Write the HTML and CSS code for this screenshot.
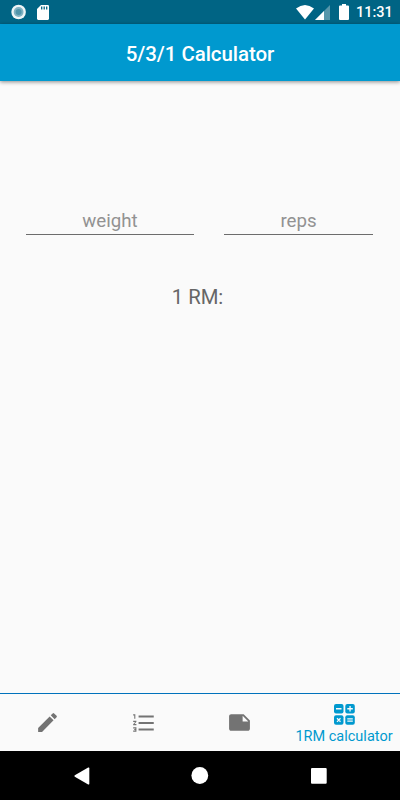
FILE: index.html
```html
<!DOCTYPE html>
<html lang="en">
<head>
<meta charset="utf-8">
<title>5/3/1 Calculator</title>
<link rel="stylesheet" href="styles.css">
</head>
<body>
<div class="status">
  <svg class="disc" width="16" height="16" viewBox="0 0 16 16"><circle cx="7.600" cy="8" r="7.3" fill="#eef5f7"/><circle cx="7.600" cy="8" r="4.9" fill="#80b2c2"/><circle cx="7.600" cy="8" r="3" fill="#4f94aa"/></svg>
  <svg class="sd" width="12" height="15" viewBox="0 0 12 15"><path fill="#fff" d="M4 0h6.8Q12 0 12 1.2v12.4Q12 15 10.8 15H1.2Q0 15 0 13.600V4z"/><path d="M4.700 1.500v3M7.200 1.500v3M9.700 1.500v3" stroke="#006484" stroke-width="1.300"/></svg>
  <span class="spacer"></span>
  <svg class="wifi" width="18" height="15" viewBox="0 0 18 15"><path fill="#fff" d="M0 3.500Q9-3.500 18 3.500L9 14.500z"/></svg>
  <svg class="signal" width="15" height="15" viewBox="0 0 15 15"><path fill="#5796aa" d="M15 0v15H0z"/><path fill="#fff" d="M9 6v9H0z"/></svg>
  <svg class="battery" width="10" height="16" viewBox="0 0 10 16"><path fill="#fff" d="M3 0h4v1.500h2Q10 1.500 10 2.500V15q0 1-1 1H1q-1 0-1-1V2.500q0-1 1-1h2z"/></svg>
  <span class="clock">11:31</span>
</div>
<header class="appbar"><h1>5/3/1 Calculator</h1></header>
<main>
  <div class="fields">
    <div class="field weight">weight</div>
    <div class="field reps">reps</div>
  </div>
  <div class="result">1 RM:</div>
</main>
<nav class="tabs">
  <div class="tab nudge"><svg width="25" height="25" viewBox="0 0 24 24"><path fill="#737373" d="M3 17.250V21h3.750L17.810 9.940l-3.750-3.750L3 17.250zM20.710 7.040a1 1 0 0 0 0-1.410l-2.340-2.340a1 1 0 0 0-1.410 0l-1.830 1.830 3.750 3.750 1.830-1.830z"/></svg></div>
  <div class="tab"><svg width="26" height="26" viewBox="0 0 24 24"><path fill="#737373" d="M2 17h2v.5H3v1h1v.5H2v1h3v-4H2v1zm1-9h1V4H2v1h1v3zm-1 3h1.800L2 13.100v.9h3v-1H3.200L5 10.900V10H2v1zm5-6v2h14V5H7zm0 14h14v-2H7v2zm0-6h14v-2H7v2z"/></svg></div>
  <div class="tab nudge"><svg width="25" height="25" viewBox="0 0 24 24"><path fill="#737373" d="M22 10l-6-6H4c-1.100 0-2 .9-2 2v12c0 1.100.9 2 2 2h16c1.100 0 2-.9 2-2v-8zm-7-4.500l5.500 5.500H15V5.500z"/></svg></div>
  <div class="tab active">
    <svg width="21" height="21" viewBox="0 0 21 21"><g fill="#0099cf"><rect width="9.500" height="9.500" rx="2"/><rect x="11.300" width="9.500" height="9.500" rx="2"/><rect y="11.300" width="9.500" height="9.500" rx="2"/><rect x="11.300" y="11.300" width="9.500" height="9.500" rx="2"/></g><path d="M2 4.750h5.500M13.300 4.750h5.500M16.050 2v5.500M3 14.300l3.500 3.500M6.500 14.300L3 17.800M13.300 14.900h5.500M13.300 17.200h5.500" fill="none" stroke="#fafafa" stroke-width="1.300"/></svg>
    <span>1RM calculator</span>
  </div>
</nav>
<div class="system">
  <svg width="16" height="18" viewBox="0 0 16 18"><path fill="#fff" d="M14.200.6Q15.300 0 15.300 1.200v15.600q0 1.200-1.100.6L.8 9.700q-1-.7 0-1.400z"/></svg>
  <svg width="18" height="18" viewBox="0 0 18 18"><circle cx="7.800" cy="8.500" r="8.400" fill="#fff"/></svg>
  <svg width="16" height="16" viewBox="0 0 16 16"><rect width="15.700" height="15.700" rx="1" fill="#fff"/></svg>
</div>
</body>
</html>
```
FILE: styles.css
```css
* { box-sizing: border-box; }
body {
  margin: 0;
  height: 800px;
  display: flex;
  flex-direction: column;
  overflow: hidden;
  background: #fafafa;
  font-family: Roboto, sans-serif;
}
svg { display: block; flex: none; overflow: visible; }
.status {
  height: 24px;
  flex: none;
  display: flex;
  align-items: center;
  padding: 0 8px 0 11px;
  background: #006484;
}
.sd { margin-left: 10px; }
.spacer { flex: 1; }
.wifi { margin-right: 1px; }
.battery { margin: 0 7px 0 9px; }
.clock {
  width: 36px;
  color: #fff;
  font-size: 14.5px;
  font-weight: 500;
  line-height: 24px;
  white-space: nowrap;
  padding-top: 2px;
}
.appbar {
  height: 57px;
  flex: none;
  background: #0099cf;
  box-shadow: 0 1px 4px rgba(0, 0, 0, .45);
}
h1 {
  margin: 0;
  padding-top: 1px;
  color: #fff;
  font-size: 20.5px;
  font-weight: 500;
  line-height: 58px;
  letter-spacing: -.06px;
  text-align: center;
}
main { flex: 1; padding: 123px 27px 0 26px; }
.fields { display: flex; gap: 30px; }
.field {
  height: 31px;
  border-bottom: 1px solid #6c6c6c;
  color: #929292;
  font-size: 18.7px;
  line-height: 34px;
  text-align: center;
}
.weight { width: 168px; }
.reps { flex: 1; }
.result {
  margin-top: 46px;
  padding-right: 4px;
  color: #666;
  font-size: 20.3px;
  line-height: 32px;
  text-align: center;
}
.tabs {
  height: 58px;
  flex: none;
  display: flex;
  border-top: 1px solid #0072bc;
}
.tab {
  width: 96px;
  display: flex;
  align-items: center;
  justify-content: center;
}
.nudge { padding-right: 1px; }
.active {
  width: 112px;
  flex-direction: column;
  justify-content: flex-start;
  padding-top: 10px;
  color: #0099cf;
  font-size: 14.5px;
  line-height: 23px;
  white-space: nowrap;
}
.system {
  height: 49px;
  flex: none;
  display: flex;
  align-items: center;
  justify-content: space-between;
  padding: 0 73px 0 74px;
  background: #000;
}
```
